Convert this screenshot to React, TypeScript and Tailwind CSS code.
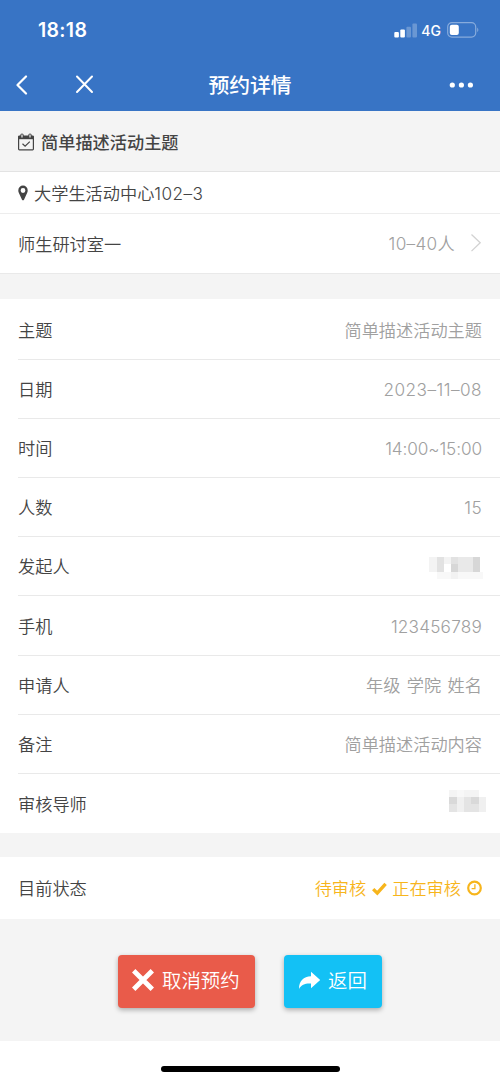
import type { ReactNode } from "react";

const rows: [string, ReactNode][] = [
  ["主题", "简单描述活动主题"],
  ["日期", <span className="tracking-[0.45px]">2023–11–08</span>],
  ["时间", <span className="tracking-[-0.1px]">14:00~15:00</span>],
  ["人数", <span className="tracking-[0.4px]">15</span>],
  ["发起人", <MaskedName />],
  ["手机", <span className="tracking-[0.2px]">123456789</span>],
  ["申请人", <span className="[word-spacing:1.6px]">年级 学院 姓名</span>],
  ["备注", "简单描述活动内容"],
  ["审核导师", <MaskedTutor />],
];

function MaskedName() {
  return (
    <svg width="54" height="22" viewBox="0 0 54 22" shapeRendering="crispEdges" className="translate-x-px translate-y-px">
      <path fill="#f3f3f3" d="M0 0h8v15H0zM15 0h7v7h-7z" />
      <path fill="#e2e2e2" d="M8 0h7v15H8zM22 0h7v15h-7z" />
      <path fill="#e9e9e9" d="M29 0h15v15H29z" />
      <path fill="#d7d7d7" d="M44 0h7v15h-7zM22 7h7v8h-7z" />
      <path fill="#f8f8f8" d="M8 15h14v7H8zM29 15h25v7H29z" />
      <path fill="#f2f2f2" d="M22 15h7v7h-7z" />
    </svg>
  );
}

function MaskedTutor() {
  return (
    <svg width="37" height="22" viewBox="0 0 37 22" shapeRendering="crispEdges" className="translate-x-[4px] -translate-y-[4px]">
      <path fill="#f4f4f4" d="M0 0h8v7H0zM15 0h15v7H15z" />
      <path fill="#f8f8f8" d="M8 0h7v7H8z" />
      <path fill="#d9d9d9" d="M0 7h8v7H0zM22 7h8v7h-8z" />
      <path fill="#e4e4e4" d="M0 14h8v8H0zM15 7h7v15h-7zM22 14h8v8h-8z" />
      <path fill="#f0f0f0" d="M8 7h7v15H8zM30 7h7v15h-7z" />
    </svg>
  );
}

function Header() {
  return (
    <header className="h-[111px] bg-[#3874c5] font-normal text-white">
      <div className="flex h-[60px] items-center justify-between pl-[38px] pr-[20px]">
        <span className="text-[19.5px] font-semibold tracking-[0.3px]">18:18</span>
        <div className="flex items-center">
          <svg width="24" height="15" viewBox="0 0 24 15" fill="#fff">
            <rect x="0.3" y="9" width="4.6" height="5.5" rx="1" />
            <rect x="6.3" y="6.5" width="4.6" height="8" rx="1" />
            <rect x="12.4" y="3.8" width="4.6" height="10.7" rx="1" opacity=".25" />
            <rect x="18.4" y="0.5" width="4.6" height="14" rx="1" opacity=".25" />
          </svg>
          <span className="ml-[3px] pt-px text-[14px] font-medium">4G</span>
          <svg className="ml-[6px]" width="33" height="16" viewBox="0 0 33 16">
            <rect x="0.7" y="0.7" width="28" height="14.4" rx="4.2" fill="none" stroke="#fff" strokeOpacity=".4" strokeWidth="1.2" />
            <rect x="2.8" y="2.7" width="9" height="10.4" rx="2" fill="#fff" />
            <path d="M30.3 5.5q2 2.4 0 4.8z" fill="#fff" opacity=".45" />
          </svg>
        </div>
      </div>
      <div className="grid h-[50px] grid-cols-[1fr_auto_1fr] items-center">
        <div className="flex items-center pl-[14px]">
          <svg width="14" height="20" viewBox="0 0 14 20" fill="none" stroke="#fff" strokeWidth="2.2" strokeLinecap="round" strokeLinejoin="round">
            <path d="M12 1.5 3.5 10 12 18.5" />
          </svg>
          <svg className="ml-[47px]" width="20" height="20" viewBox="0 0 20 20" fill="none" stroke="#fff" strokeWidth="2" strokeLinecap="round">
            <path d="M2 1.5 17 17M17 1.5 2 17" />
          </svg>
        </div>
        <h1 className="pt-[1px] text-[20.8px] font-medium">预约详情</h1>
        <svg className="mr-[26px] justify-self-end" width="25" height="6" viewBox="0 0 25 6" fill="#fff">
          <circle cx="3.3" cy="3" r="2.6" />
          <circle cx="12.4" cy="3" r="2.6" />
          <circle cx="21.4" cy="3" r="2.6" />
        </svg>
      </div>
    </header>
  );
}

export default function App() {
  return (
    <div className="flex h-[1082px] w-[500px] flex-col overflow-hidden bg-[#f4f4f4] font-[Inter,'Noto_Sans_CJK_SC',sans-serif] text-[17.2px] leading-[24px] font-[350] text-[#444]">
      <Header />
      <div className="flex h-[61px] items-center border-b border-[#e3e3e3] px-[18px] pt-[3px] font-medium">
        <svg width="16" height="18" viewBox="0 0 16 18" fill="none" stroke="#444" strokeWidth="1.2" className="-translate-y-px">
          <rect x="0.6" y="3" width="14.8" height="13.8" rx="0.8" />
          <path fill="#444" stroke="none" d="M.5 3h15v3.2H.5z" />
          <path strokeWidth="3.4" strokeLinecap="round" d="M4 2.2v1.6M12 2.2v1.6" />
          <path stroke="#f4f4f4" strokeWidth="1.2" d="M4 1.5v3M12 1.5v3" />
          <path d="m4.5 10.8 2.6 2.4 4.7-4.6" />
        </svg>
        <h2 className="ml-[7px] pt-px">简单描述活动主题</h2>
      </div>
      <div className="flex h-[42px] items-center border-b border-[#ededed] bg-white px-[18px]">
        <svg width="10" height="16" viewBox="0 0 10 16" fill="#444">
          <path fillRule="evenodd" d="M5 .6a4.7 4.7 0 0 1 4.7 4.8c0 1-.2 1.7-.5 2.4L6 14.7c-.4.8-1.6.8-2 0L.8 7.8C.5 7.1.3 6.4.3 5.4A4.7 4.7 0 0 1 5 .6zm0 2.5a2.4 2.4 0 1 0 0 4.8 2.4 2.4 0 0 0 0-4.8z" />
        </svg>
        <span className="ml-[6px] pt-[2px]">大学生活动中心<span className="tracking-[0.4px]">102–3</span></span>
      </div>
      <div className="flex h-[60px] items-center border-b border-[#e9e9e9] bg-white px-[18px]">
        <span className="pt-[2px]">师生研讨室一</span>
        <span className="ml-auto pt-[1px] tracking-[0.3px] text-[#a0a0a0]">10–40人</span>
        <svg className="ml-[15px] -translate-y-px" width="12" height="20" viewBox="0 0 12 20" fill="none" stroke="#d2d2d2" strokeWidth="1.3">
          <path d="m1.5 1.5 8.7 8.3-8.7 8.3" />
        </svg>
      </div>
      <section className="mt-[25px] h-[534px] bg-white pl-[18px] pt-[1.5px]">
        {rows.map(([label, value], i) => (
          <div key={i} className="flex h-[59.2px] items-center justify-between border-b border-[#e9e9e9] pr-[18px] pt-[2px] last:border-0">
            <span>{label}</span>
            <span className="text-[#a0a0a0]">{value}</span>
          </div>
        ))}
      </section>
      <section className="mt-[24px] flex h-[62px] items-center bg-white px-[18px] pt-[2px]">
        <span>目前状态</span>
        <div className="ml-auto flex items-center text-[#f7b51c]">
          <span>待审核</span>
          <svg className="ml-[6px]" width="15" height="14" viewBox="0 0 15 14" fill="none" stroke="currentColor" strokeWidth="3.3">
            <path d="m1.2 7.1 4.1 4.1L13.6 1.8" />
          </svg>
          <span className="ml-[5px]">正在审核</span>
          <svg className="ml-[6px] -translate-y-px" width="15" height="16" viewBox="0 0 15 16" fill="none" stroke="currentColor">
            <circle cx="7.5" cy="8" r="6.3" strokeWidth="2.2" />
            <path strokeWidth="1.3" d="M7.9 4.2v4.5H4.6" />
          </svg>
        </div>
      </section>
      <div className="flex h-[122px] gap-[29px] pl-[118px] pt-[36px] text-[19.4px] text-white">
        <button className="flex h-[53px] w-[137px] items-center rounded-[4px] bg-[#e95b4a] pb-[3px] pl-[13px] shadow-[0_2px_5px_rgba(0,0,0,0.3)]">
          <svg width="24" height="24" viewBox="0 0 24 24" stroke="#fff" strokeWidth="4.8">
            <path d="m2.7 2.7 18.6 18.6M21.3 2.7 2.7 21.3" />
          </svg>
          <span className="ml-[7px] pt-[2px]">取消预约</span>
        </button>
        <button className="flex h-[53px] w-[98px] items-center rounded-[4px] bg-[#13c1f5] pb-[3px] pl-[14px] shadow-[0_2px_5px_rgba(0,0,0,0.3)]">
          <svg width="23" height="19" viewBox="0 0 23 19" fill="#fff">
            <path d="M13 .8 22.2 9 13 17.2v-4.6C7 12.3 3.5 13.6 1 18 1 10 5.5 5.5 13 5.3z" />
          </svg>
          <span className="ml-[7px] pt-[2px]">返回</span>
        </button>
      </div>
      <footer className="flex h-[41px] justify-center bg-white pt-[25px]">
        <div className="h-[6px] w-[179px] rounded-full bg-black" />
      </footer>
    </div>
  );
}
